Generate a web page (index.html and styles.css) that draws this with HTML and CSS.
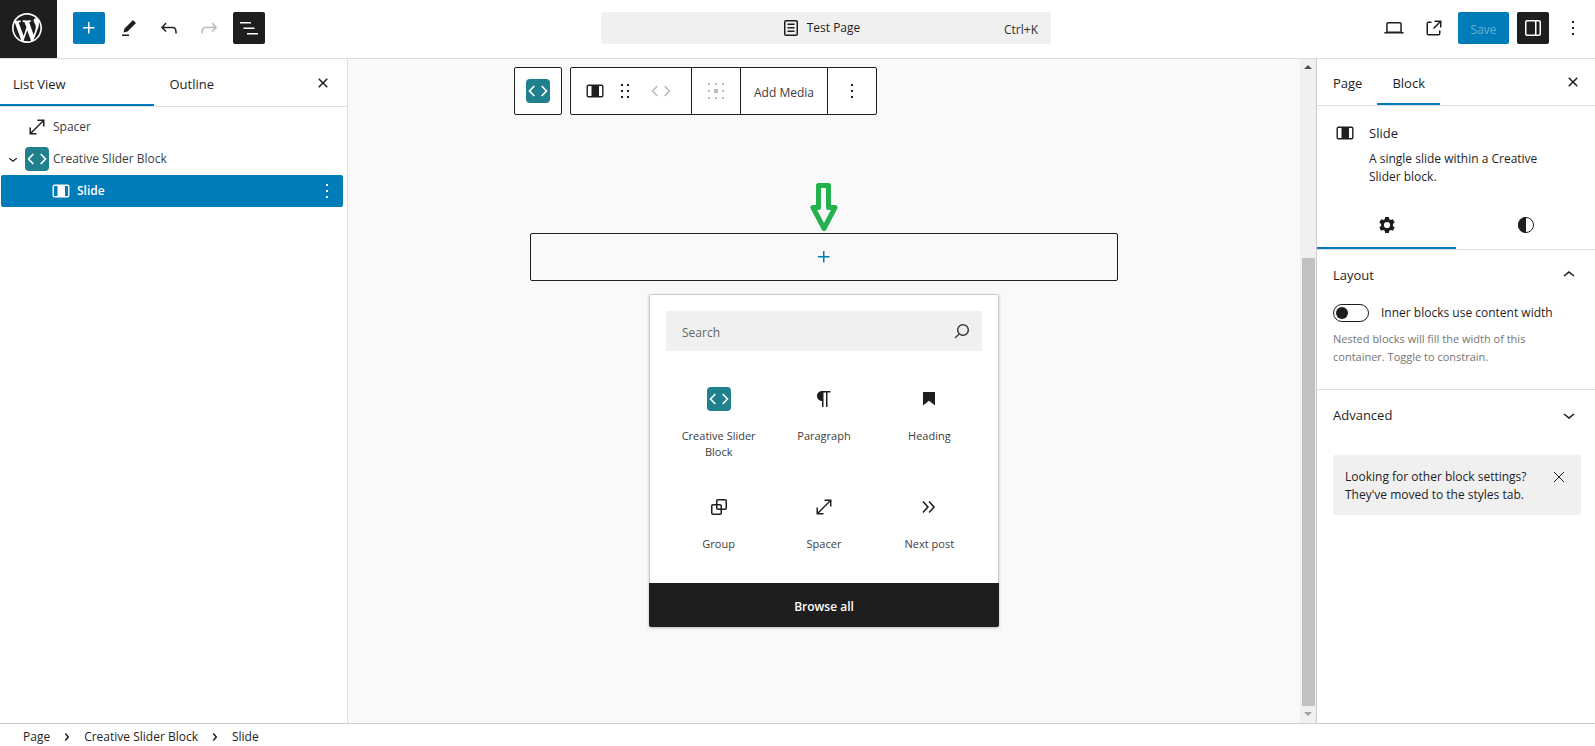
FILE: index.html
```html
<!DOCTYPE html>
<html lang="en">
<head>
<meta charset="utf-8">
<title>Test Page</title>
<link rel="stylesheet" href="styles.css">
</head>
<body>
<svg class="sprite" aria-hidden="true">
  <symbol id="plus" viewBox="0 0 24 24"><path d="M11 12.5V17.5H12.5V12.5H17.5V11H12.5V6H11V11H6V12.5H11Z"/></symbol>
  <symbol id="close" viewBox="0 0 24 24"><path d="M12 13.06l3.712 3.713 1.061-1.06L13.061 12l3.712-3.712-1.06-1.06L12 10.938 8.288 7.227l-1.061 1.06L10.939 12l-3.712 3.712 1.06 1.061L12 13.061z"/></symbol>
  <symbol id="more" viewBox="0 0 24 24"><path d="M13 19h-2v-2h2v2zm0-6h-2v-2h2v2zm0-6h-2V5h2v2z"/></symbol>
  <symbol id="spacer" viewBox="0 0 24 24"><path d="M7 18h4.5v1.5h-7v-7H6V17L17 6h-4.5V4.5h7v7H18V7L7 18Z"/></symbol>
  <symbol id="slide" viewBox="0 0 24 24"><rect x="4.2" y="6.2" width="15.6" height="11.6" rx="1.3" fill="none" stroke="currentColor" stroke-width="1.4"/><path d="M8.5 6h7.5v12H8.5z"/></symbol>
  <symbol id="code" viewBox="0 0 24 24"><path d="M8.300 7 3.500 12l4.800 5M15.700 7l4.800 5-4.800 5" fill="none" stroke="currentColor" stroke-width="1.6"/></symbol>
  <symbol id="chevron-down" viewBox="0 0 24 24"><path d="M17.500 11.600L12 16l-5.500-4.400.9-1.200L12 14l4.500-3.600 1 1.200z"/></symbol>
  <symbol id="chevron-up" viewBox="0 0 24 24"><path d="M6.500 12.400L12 8l5.500 4.400-.9 1.200L12 10l-4.500 3.600-1-1.200z"/></symbol>
  <symbol id="chevron-right" viewBox="0 0 24 24"><path d="M10.860 8.040L14.280 12.030L10.860 16.020L9.720 15.040L12.300 12.030L9.720 9.020L10.860 8.040Z"/></symbol>
</svg>

<header class="header">
  <a class="logo" href="#" aria-label="View Pages">
    <svg width="36" height="36" viewBox="-2 -2 24 24"><path d="M20 10c0-5.510-4.490-10-10-10C4.480 0 0 4.490 0 10c0 5.520 4.480 10 10 10 5.510 0 10-4.480 10-10zM7.780 15.370L4.370 6.220c.55-.02 1.170-.08 1.170-.08.5-.06.44-1.130-.06-1.110 0 0-1.450.11-2.370.11-.18 0-.37 0-.58-.01C4.120 2.690 6.870 1.110 10 1.110c2.330 0 4.450.87 6.050 2.340-.68-.11-1.650.39-1.650 1.580 0 .74.45 1.360.9 2.100.35.61.55 1.360.55 2.460 0 1.490-1.400 5-1.400 5l-3.030-8.370c.54-.02.82-.17.82-.17.5-.05.44-1.250-.06-1.220 0 0-1.440.12-2.380.12-.87 0-2.330-.12-2.330-.12-.5-.03-.56 1.200-.06 1.220l.92.08 1.260 3.410zM17.410 10c.24-.64.74-1.870.43-4.250.7 1.290 1.050 2.710 1.050 4.250 0 3.290-1.730 6.240-4.400 7.780.97-2.590 1.940-5.200 2.920-7.780zM6.100 18.090C3.120 16.650 1.110 13.530 1.110 10c0-1.300.23-2.480.72-3.590C3.250 10.300 4.670 14.200 6.100 18.090zm4.030-6.630l2.580 6.980c-.86.29-1.760.45-2.710.45-.79 0-1.570-.11-2.290-.33.81-2.380 1.620-4.740 2.420-7.100z"/></svg>
  </a>
  <div class="tools">
    <button class="btn primary" aria-label="Toggle block inserter"><svg class="icon"><use href="#plus"/></svg></button>
    <button class="btn" aria-label="Tools"><svg class="icon" viewBox="0 0 24 24"><path d="m19 7-3-3-8.500 8.500-1 4 4-1L19 7Zm-7 11.500H5V20h7v-1.500Z"/></svg></button>
    <button class="btn" aria-label="Undo"><svg class="icon" viewBox="0 0 24 24"><path d="M18.300 11.700c-.6-.6-1.400-.9-2.300-.9H6.700l2.900-3.300-1.100-1-4.500 5L8.500 16l1-1-2.700-2.700H16c.5 0 .9.2 1.300.5 1 1 1 3.400 1 4.500v.3h1.500v-.2c0-1.500 0-4.300-1.500-5.700z"/></svg></button>
    <button class="btn" aria-label="Redo" disabled><svg class="icon" viewBox="0 0 24 24"><path d="M15.600 6.500l-1.100 1 2.900 3.300H8c-.9 0-1.700.3-2.300.9-1.400 1.500-1.400 4.200-1.400 5.600v.2h1.500v-.3c0-1.100 0-3.500 1-4.500.3-.3.7-.5 1.300-.5h9.200L14.500 15l1.100 1.100 4.600-4.600-4.600-5z"/></svg></button>
    <button class="btn dark" aria-label="Document Overview"><svg class="icon" viewBox="0 0 24 24"><path d="M3 6h11v1.500H3V6Zm3.500 5.500h11V13h-11v-1.500ZM21 17H10v1.500h11V17Z"/></svg></button>
  </div>
  <button class="command">
    <span class="command-title"><svg class="icon" viewBox="0 0 24 24"><path d="M15.500 7.500h-7V9h7V7.500Zm-7 3.500h7v1.500h-7V11Zm7 3.500h-7V16h7v-1.500Z"/><path d="M17 4H7a2 2 0 0 0-2 2v12a2 2 0 0 0 2 2h10a2 2 0 0 0 2-2V6a2 2 0 0 0-2-2ZM7 5.500h10a.5.5 0 0 1 .5.5v12a.5.5 0 0 1-.5.5H7a.5.5 0 0 1-.5-.5V6a.5.5 0 0 1 .5-.5Z" fill-rule="evenodd"/></svg>Test Page</span>
    <span class="shortcut">Ctrl+K</span>
  </button>
  <div class="actions">
    <button class="btn" aria-label="View"><svg class="icon" viewBox="0 0 24 24"><path d="M20.500 16h-.7V8c0-1.100-.9-2-2-2H6.200c-1.100 0-2 .9-2 2v8h-.7c-.8 0-1.500.7-1.500 1.500h20c0-.8-.7-1.500-1.500-1.500zM5.700 8c0-.3.2-.5.5-.5h11.600c.3 0 .5.2.5.5v7.600H5.700V8z"/></svg></button>
    <button class="btn" aria-label="View Page"><svg class="icon" viewBox="0 0 24 24"><path d="M19.500 4.500h-7V6h4.440l-5.970 5.970 1.060 1.060L18 7.060v4.440h1.500v-7Zm-13 1a2 2 0 0 0-2 2v10a2 2 0 0 0 2 2h10a2 2 0 0 0 2-2v-3H17v3a.5.5 0 0 1-.5.5h-10a.5.5 0 0 1-.5-.5v-10a.5.5 0 0 1 .5-.5h3V5.500h-3Z"/></svg></button>
    <button class="save">Save</button>
    <button class="btn dark" aria-label="Settings"><svg class="icon" viewBox="0 0 24 24"><path d="M18 4H6c-1.100 0-2 .9-2 2v12c0 1.100.9 2 2 2h12c1.100 0 2-.9 2-2V6c0-1.100-.9-2-2-2zm-4 14.500H6c-.3 0-.5-.2-.5-.5V6c0-.3.2-.5.5-.5h8v13zm4.500-.5c0 .3-.2.5-.5.5h-2.500v-13H18c.3 0 .5.2.5.5v12z"/></svg></button>
    <button class="btn" aria-label="Options"><svg class="icon"><use href="#more"/></svg></button>
  </div>
</header>

<div class="body">
  <aside class="list-panel">
    <div class="tabs list-tabs">
      <button class="tab active">List View</button>
      <button class="tab">Outline</button>
      <button class="btn tabs-close" aria-label="Close"><svg class="icon"><use href="#close"/></svg></button>
    </div>
    <ul class="tree">
      <li class="row"><span class="expander"></span><a class="row-link" href="#"><svg class="icon"><use href="#spacer"/></svg>Spacer</a></li>
      <li class="row"><span class="expander"><svg class="icon small"><use href="#chevron-down"/></svg></span><a class="row-link" href="#"><svg class="icon brand"><use href="#code"/></svg>Creative Slider Block</a></li>
      <li class="row selected"><a class="row-link" href="#"><svg class="icon"><use href="#slide"/></svg>Slide</a><button class="btn" aria-label="Options for Slide"><svg class="icon"><use href="#more"/></svg></button></li>
    </ul>
  </aside>

  <main class="canvas">
    <div class="stage">
      <div class="toolbar">
        <div class="group"><button class="tool parent" aria-label="Select Creative Slider Block"><svg class="icon brand"><use href="#code"/></svg></button></div>
        <div class="group">
          <div class="tool-set">
            <button class="tool" aria-label="Slide"><svg class="icon"><use href="#slide"/></svg></button>
            <button class="tool" aria-label="Drag"><svg class="icon" viewBox="0 0 24 24"><path d="M8 7h2V5H8v2zm0 6h2v-2H8v2zm0 6h2v-2H8v2zm6-14v2h2V5h-2zm0 8h2v-2h-2v2zm0 6h2v-2h-2v2z"/></svg></button>
            <button class="tool movers" aria-label="Move" disabled><svg class="icon"><use href="#code"/></svg></button>
          </div>
          <button class="tool wide" aria-label="Change content position" disabled><svg class="icon" viewBox="0 0 24 24"><path d="M4 4h2v2H4zM11 4h2v2h-2zM18 4h2v2h-2zM4 11h2v2H4zM10 10h4v4h-4zM18 11h2v2h-2zM4 18h2v2H4zM11 18h2v2h-2zM18 18h2v2h-2z"/></svg></button>
          <button class="tool text">Add Media</button>
          <button class="tool wide" aria-label="Options"><svg class="icon"><use href="#more"/></svg></button>
        </div>
      </div>
      <svg class="pointer" width="28" height="48" viewBox="0 0 28 48"><path d="M8.500 2.500h10v22h6.500L14 45.500 3 24.500h5.500z"/></svg>
      <button class="appender" aria-label="Add block"><svg class="icon"><use href="#plus"/></svg></button>
      <section class="inserter">
        <div class="inserter-content">
          <label class="search"><input type="search" placeholder="Search" aria-label="Search"><svg class="icon" viewBox="0 0 24 24"><path d="M13 5c-3.300 0-6 2.700-6 6 0 1.400.5 2.700 1.300 3.700l-3.800 3.800 1.100 1.100 3.800-3.800c1 .8 2.300 1.300 3.700 1.300 3.300 0 6-2.700 6-6S16.300 5 13 5zm0 10.500c-2.500 0-4.500-2-4.500-4.500s2-4.500 4.500-4.500 4.500 2 4.500 4.500-2 4.500-4.500 4.500z"/></svg></label>
          <div class="blocks">
            <button class="block"><svg class="icon brand"><use href="#code"/></svg><span>Creative Slider Block</span></button>
            <button class="block"><svg class="icon" viewBox="0 0 24 24"><path d="m9.996 14v6h1.500v-14.500h2.500v14.500h1.500v-14.500h3v-1.500h-8.500c-2.760 0-5 2.240-5 5 0 2.760 2.240 5 5 5z"/></svg><span>Paragraph</span></button>
            <button class="block"><svg class="icon" viewBox="0 0 24 24"><path d="M6 5V18.590L12 13.850L18 18.590V5H6Z"/></svg><span>Heading</span></button>
            <button class="block"><svg class="icon" viewBox="0 0 24 24"><path d="M18 4h-7c-1.100 0-2 .9-2 2v3H6c-1.100 0-2 .9-2 2v7c0 1.100.9 2 2 2h7c1.100 0 2-.9 2-2v-3h3c1.100 0 2-.9 2-2V6c0-1.100-.9-2-2-2zm-4.500 14c0 .3-.2.5-.5.5H6c-.3 0-.5-.2-.5-.5v-7c0-.3.2-.5.5-.5h3V13c0 1.100.9 2 2 2h2.500v3zm0-4.500H11c-.3 0-.5-.2-.5-.5v-2.500H13c.3 0 .5.2.5.5v2.500zm5-.5c0 .3-.2.5-.5.5h-3V11c0-1.100-.9-2-2-2h-2.500V6c0-.3.2-.5.5-.5h7c.3 0 .5.2.5.5v7z" fill-rule="evenodd"/></svg><span>Group</span></button>
            <button class="block"><svg class="icon"><use href="#spacer"/></svg><span>Spacer</span></button>
            <button class="block"><svg class="icon" viewBox="0 0 24 24"><path d="M6.600 6L5.400 7l4.500 5-4.500 5 1.100 1 5.500-6-5.400-6zm6 0l-1.100 1 4.500 5-4.500 5 1.100 1 5.500-6-5.500-6z"/></svg><span>Next post</span></button>
          </div>
        </div>
        <button class="browse">Browse all</button>
      </section>
    </div>
    <div class="scrollbar" aria-hidden="true">
      <svg width="8" height="16" viewBox="0 0 8 16"><path d="M0 10l4-4 4 4z"/></svg>
      <div class="track"><div class="thumb"></div></div>
      <svg class="faded" width="8" height="17" viewBox="0 0 8 17"><path d="M0 6h8L4 10z"/></svg>
    </div>
  </main>

  <aside class="settings">
    <div class="tabs">
      <button class="tab">Page</button>
      <button class="tab active">Block</button>
      <button class="btn tabs-close" aria-label="Close Settings"><svg class="icon"><use href="#close"/></svg></button>
    </div>
    <div class="card">
      <svg class="icon"><use href="#slide"/></svg>
      <div><h2 class="title">Slide</h2><p class="description">A single slide within a Creative Slider block.</p></div>
    </div>
    <div class="icon-tabs">
      <button class="icon-tab active" aria-label="Settings"><svg class="icon" viewBox="0 0 24 24"><path fill-rule="evenodd" d="M10.200 4h3.600l.5 2.300 1.300.8 2.300-.8 1.800 3.200-1.800 1.600v1.800l1.800 1.600-1.800 3.200-2.300-.8-1.300.8-.5 2.300h-3.600l-.5-2.300-1.300-.8-2.300.8-1.800-3.200 1.800-1.600v-1.800L4.300 9.500l1.800-3.200 2.300.8 1.300-.8zM12 8.900a3.100 3.100 0 1 0 0 6.200 3.100 3.100 0 0 0 0-6.200z"/></svg></button>
      <button class="icon-tab" aria-label="Styles"><svg class="icon" viewBox="0 0 24 24"><circle cx="12" cy="12" r="7.500" fill="none" stroke="currentColor"/><path d="M12 4a8 8 0 0 0 0 16z"/></svg></button>
    </div>
    <section class="panel">
      <button class="panel-head">Layout<svg class="icon"><use href="#chevron-up"/></svg></button>
      <label class="toggle"><input type="checkbox" class="switch">Inner blocks use content width</label>
      <p class="help">Nested blocks will fill the width of this container. Toggle to constrain.</p>
    </section>
    <section class="panel last"><button class="panel-head">Advanced<svg class="icon"><use href="#chevron-down"/></svg></button></section>
    <div class="notice"><p>Looking for other block settings? They've moved to the styles tab.</p><button class="btn" aria-label="Dismiss"><svg class="icon thin" viewBox="0 0 24 24"><path d="M7 7l10 10M17 7L7 17"/></svg></button></div>
  </aside>
</div>

<nav class="footer" aria-label="Block breadcrumb">
  <a href="#">Page</a><svg class="icon"><use href="#chevron-right"/></svg><a href="#">Creative Slider Block</a><svg class="icon"><use href="#chevron-right"/></svg><span>Slide</span>
</nav>
</body>
</html>
```
FILE: styles.css
```css
* { box-sizing: border-box; }
body {
  margin: 0;
  height: 100vh;
  display: flex;
  flex-direction: column;
  overflow: hidden;
  background: #fff;
  color: #1e1e1e;
  font: 12px/18px "Open Sans", "Noto Sans", sans-serif;
}
button, input { font: inherit; color: inherit; }
button { border: 0; padding: 0; background: none; }
a { color: inherit; text-decoration: none; }
h2, p, ul { margin: 0; padding: 0; }
.sprite { position: absolute; width: 0; height: 0; }
.icon { width: 24px; height: 24px; flex: none; fill: currentColor; }
.icon.small { width: 18px; height: 18px; }
.brand { background: #21808d; color: #fff; border-radius: 4px; }
.btn {
  width: 32px;
  height: 32px;
  flex: none;
  display: flex;
  align-items: center;
  justify-content: center;
  border-radius: 2px;
}
.btn:disabled, .tool:disabled { color: #bbb; }
.primary { background: #007cba; color: #fff; }
.dark { background: #1e1e1e; color: #fff; }

.header {
  height: 59px;
  flex: none;
  display: grid;
  grid-template-columns: 57px 1fr 450px 1fr;
  border-bottom: 1px solid #ddd;
}
.header > * { align-self: center; }
.header .logo {
  align-self: stretch;
  display: flex;
  align-items: center;
  justify-content: center;
  padding-right: 3px;
  padding-bottom: 2px;
  background: #1e1e1e;
  fill: #fff;
}
.tools, .actions { display: flex; gap: 8px; padding: 0 16px 2px; }
.actions { justify-content: flex-end; padding-right: 6px; }
.command {
  height: 32px;
  margin-bottom: 2px;
  display: grid;
  grid-template-columns: 1fr auto 1fr;
  align-items: center;
  padding: 0 13px 0 0;
  border-radius: 4px;
  background: #f0f0f0;
}
.command-title { grid-column: 2; display: flex; align-items: center; gap: 4px; line-height: 20px; }
.shortcut { justify-self: end; padding-top: 3px; color: #2f2f2f; }
.save { width: 51px; height: 32px; padding-top: 3px; border-radius: 2px; background: #007cba; color: #66b0d6; }

.body { flex: 1; min-height: 0; display: flex; }
.tabs { height: 47px; display: flex; align-items: stretch; border-bottom: 1px solid #ddd; }
.tab { padding: 5px 16px 0; font-size: 13px; font-weight: 500; border-bottom: 2px solid transparent; }
.tab.active { border-bottom-color: #007cba; }
.tabs-close { align-self: center; margin-left: auto; margin-right: 6px; }

.list-panel { width: 348px; flex: none; border-right: 1px solid #ddd; }
.list-tabs { height: 48px; }
.list-tabs .tab { width: 154px; padding: 5px 13px 0; text-align: left; }
.list-tabs .tabs-close { margin-right: 8px; }
.list-tabs .tab + .tab { padding-left: 16px; }
.tree { list-style: none; padding: 4px 4px 0 1px; }
.row { height: 32px; display: flex; align-items: center; color: #3c3c3c; }
.expander { width: 24px; height: 24px; display: flex; align-items: center; justify-content: center; }
.row-link { flex: 1; display: flex; align-items: center; gap: 4px; line-height: 20px; color: inherit; }
.row .icon { color: #1e1e1e; }
.row .icon.brand { color: #fff; }
.selected { padding-left: 48px; border-radius: 2px; background: #007cba; color: #fff; font-weight: 600; }
.selected .icon, .row.selected .icon { color: #fff; }

.canvas { flex: 1; min-width: 0; display: flex; background: #f9f9f9; }
.stage { flex: 1; padding: 8px 0; display: flex; flex-direction: column; align-items: center; }
.toolbar { width: calc(100% - 332px); display: flex; gap: 8px; }
.group { height: 48px; display: flex; border: 1px solid #1e1e1e; border-radius: 2px; background: #fff; }
.tool { display: flex; align-items: center; justify-content: center; padding: 0; }
.tool + .tool.movers { padding-left: 12px; }
.parent { width: 46px; }
.tool-set { display: flex; padding: 0 18px 0 12px; }
.tool-set .tool:nth-child(2) { padding-left: 6px; }
.tool-set + .tool, .group > .tool + .tool { border-left: 1px solid #1e1e1e; }
.wide { width: 49px; }
.text { padding: 3px 13px 0; color: #3c3c3c; }
.pointer { margin: 68px 0 2px; fill: #f9f9f9; stroke: #22b14c; stroke-width: 5; stroke-linejoin: round; }
.appender {
  width: calc(100% - 364px);
  height: 48px;
  display: flex;
  align-items: center;
  justify-content: center;
  border: 1px solid #1e1e1e;
  border-radius: 2px;
  color: #007cba;
}
.inserter {
  width: 350px;
  margin-top: 13px;
  border-radius: 2px;
  overflow: hidden;
  background: #fff;
  box-shadow: 0 1px 3px rgba(0, 0, 0, .25);
}
.inserter-content { padding: 16px 16px 15px; border: 1px solid #ccc; border-bottom: 0; }
.search { height: 40px; display: flex; align-items: center; padding: 0 8px 0 16px; border-radius: 2px; background: #f0f0f0; color: #444; }
.search input { flex: 1; min-width: 0; padding: 3px 0 0; border: 0; outline: 0; background: none; }
.search input::placeholder { color: #666; opacity: 1; }
.blocks { display: grid; grid-template-columns: repeat(3, 1fr); row-gap: 3px; padding-top: 20px; }
.block { display: flex; flex-direction: column; align-items: center; padding: 16px 8px; gap: 17px; font-size: 11px; line-height: 16px; }
.block span { color: #3c3c3c; }
.browse { width: 100%; height: 44px; padding-top: 3px; background: #1e1e1e; color: #fff; font-weight: 600; }
.scrollbar { width: 16px; flex: none; display: flex; flex-direction: column; align-items: center; background: #f0f0f0; fill: #505050; }
.faded { fill: #a3a3a3; }
.track { flex: 1; width: 13px; display: flex; flex-direction: column; justify-content: flex-end; }
.thumb { height: 71%; background: #c1c1c1; }

.settings { width: 279px; flex: none; border-left: 1px solid #ccc; }
.settings .tab { padding: 4px 15px 0; }
.settings .tab:first-child { padding-left: 16px; }
.card { display: flex; gap: 12px; padding: 15px 32px 0 16px; }
.title { font-size: 13px; line-height: 24px; font-weight: 500; margin: 0 0 5px; }
.icon-tabs { display: grid; grid-template-columns: 1fr 1fr; height: 48px; margin-top: 16px; border-bottom: 1px solid #ddd; }
.icon-tab { display: flex; align-items: center; justify-content: center; border-bottom: 2px solid transparent; }
.icon-tab.active { border-bottom-color: #007cba; }
.panel { padding: 0 14px 23px 16px; border-bottom: 1px solid #ddd; }
.panel-head { width: 100%; height: 50px; display: flex; align-items: center; justify-content: space-between; font-size: 13px; font-weight: 500; }
.toggle { display: flex; align-items: center; gap: 12px; height: 26px; }
.switch { appearance: none; width: 36px; height: 18px; margin: 0; display: flex; align-items: center; padding: 2px; border: 1px solid #1e1e1e; border-radius: 9px; }
.switch::before { content: ""; width: 12px; height: 12px; border-radius: 50%; background: #1e1e1e; }
.help { padding: 4px 24px 0 0; font-size: 11px; color: #757575; }
.last { padding-bottom: 15px; border: 0; }
.notice { margin: 0 14px 0 16px; padding: 13px 6px 11px 12px; display: flex; background: #f0f0f0; border-radius: 2px; }
.notice p { flex: 1; }
.notice .btn { height: 18px; }
.thin { stroke: currentColor; stroke-width: 1; }

.footer { height: 23px; flex: none; display: flex; align-items: center; gap: 5px; padding: 3px 23px 0; border-top: 1px solid #ccc; }
```
